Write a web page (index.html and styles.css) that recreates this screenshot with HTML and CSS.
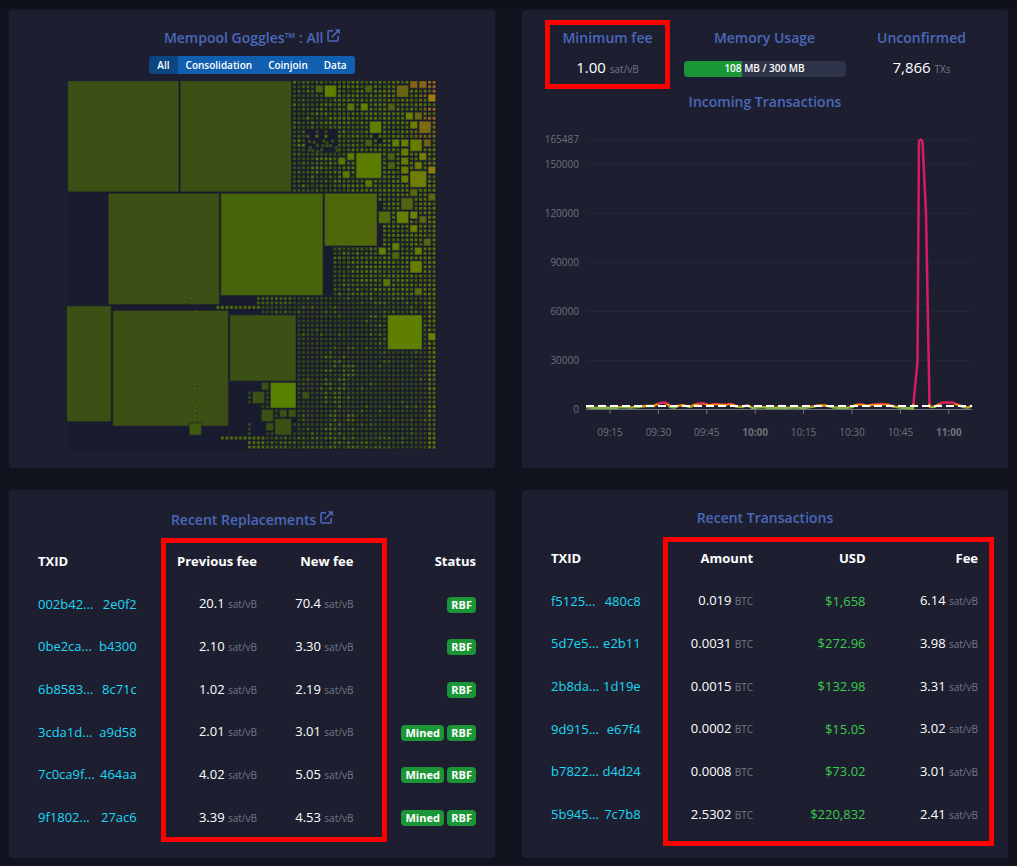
FILE: index.html
```html
<!DOCTYPE html>
<html lang="en">
<head>
    <meta charset="UTF-8">
    <meta name="viewport" content="width=device-width, initial-scale=1.0">
    <title>Mempool Dashboard</title>
    <link rel="stylesheet" href="styles.css">
</head>
<body>
<main class="dashboard">
    <!-- Goggles -->
    <section class="card goggles">
        <h5 class="card-title">
            <a href="#">Mempool Goggles™ : All
                <svg class="ext-icon" viewBox="0 0 13 13" aria-hidden="true"><path stroke-width="1.6" d="M6 1.8H2.2Q1 1.8 1 3v7.8Q1 12 2.2 12H10q1.2 0 1.2-1.2V7M4.7 8.3 11.5 1.5"/><path class="solid" d="M7.8.2h5v5z"/></svg>
            </a>
        </h5>
        <div class="btn-group">
            <button type="button" class="active">All</button>
            <button type="button">Consolidation</button>
            <button type="button">Coinjoin</button>
            <button type="button">Data</button>
        </div>
        <svg id="blocks" class="blocks" viewBox="0 0 368 368"></svg>
    </section>

    <!-- Mempool state -->
    <section class="card">
        <div class="stats">
            <div class="stat">
                <h5 class="card-title">Minimum fee</h5>
                <p class="stat-value">1.00 <span class="unit">sat/vB</span></p>
                <div class="highlight highlight-stat"></div>
            </div>
            <div class="stat stat-wide">
                <h5 class="card-title">Memory Usage</h5>
                <div class="progress">
                    <div class="progress-bar" style="width: 36%"></div>
                    <div class="progress-text">108 MB / 300 MB</div>
                </div>
            </div>
            <div class="stat">
                <h5 class="card-title">Unconfirmed</h5>
                <p class="stat-value">7,866 <span class="unit">TXs</span></p>
            </div>
        </div>
        <h5 class="card-title chart-title">Incoming Transactions</h5>
        <svg id="chart" class="chart" viewBox="0 0 486 330">
            <defs>
                <!-- line colour follows the value -->
                <linearGradient id="levels" gradientUnits="userSpaceOnUse" x1="0" y1="0" x2="0" y2="300">
                    <stop offset="0.944" stop-color="#d81b60"/>
                    <stop offset="0.948" stop-color="#fb8c00"/>
                    <stop offset="0.955" stop-color="#fb8c00"/>
                    <stop offset="0.957" stop-color="#7cb342"/>
                </linearGradient>
            </defs>
            <g id="grid"></g>
            <path class="series" stroke-width="2.5" d="M64 287L68 287.6 76 288 84 287.4 92 288 100 287 108 287.6 116 287 124 286 132 286Q138 282 142 282.6T148 287L152 287.6Q158 284.4 162 285.4T168 287Q175 282.8 180 283.2T186 285.6Q192 283.4 198 284.4T207 283.8Q211 283.8 214 286.6L220 287 225 285.4 231 288 239 287 248 288 256 287.4 264 288 273 287.2 281 288 289 287 296 285.6 304 285.6 312 287.6 322 288 330 287.2Q334 283.8 338 284.2T345 286Q353 283.8 360 284T370 286.2L378 287.6 391 288.5 395.5 241 397 21.5Q398.5 17.5 400.5 21.5L404 93 407.5 285 408 287 413 286.8Q419 282 424 282.4L431 282.6Q436 285 441 287L446 287.6 450 285.6"/>
            <path class="average" d="M64 286h386"/>
        </svg>
    </section>

    <!-- Replacements -->
    <section class="card table-card">
        <h5 class="card-title">
            <a href="#">Recent Replacements
                <svg class="ext-icon" viewBox="0 0 13 13" aria-hidden="true"><path stroke-width="1.6" d="M6 1.8H2.2Q1 1.8 1 3v7.8Q1 12 2.2 12H10q1.2 0 1.2-1.2V7M4.7 8.3 11.5 1.5"/><path class="solid" d="M7.8.2h5v5z"/></svg>
            </a>
        </h5>
        <table class="replacements">
            <thead>
                <tr><th class="txid">TXID</th><th class="prev">Previous fee</th><th class="new">New fee</th><th>Status</th></tr>
            </thead>
            <tbody>
                <tr>
                    <td><a href="#" class="hash"><span>002b42...</span><span>2e0f2</span></a></td>
                    <td>20.1 <span class="unit">sat/vB</span></td>
                    <td>70.4 <span class="unit">sat/vB</span></td>
                    <td><span class="badge">RBF</span></td>
                </tr>
                <tr>
                    <td><a href="#" class="hash"><span>0be2ca...</span><span>b4300</span></a></td>
                    <td>2.10 <span class="unit">sat/vB</span></td>
                    <td>3.30 <span class="unit">sat/vB</span></td>
                    <td><span class="badge">RBF</span></td>
                </tr>
                <tr>
                    <td><a href="#" class="hash"><span>6b8583...</span><span>8c71c</span></a></td>
                    <td>1.02 <span class="unit">sat/vB</span></td>
                    <td>2.19 <span class="unit">sat/vB</span></td>
                    <td><span class="badge">RBF</span></td>
                </tr>
                <tr>
                    <td><a href="#" class="hash"><span>3cda1d...</span><span>a9d58</span></a></td>
                    <td>2.01 <span class="unit">sat/vB</span></td>
                    <td>3.01 <span class="unit">sat/vB</span></td>
                    <td><span class="badge">Mined</span> <span class="badge">RBF</span></td>
                </tr>
                <tr>
                    <td><a href="#" class="hash"><span>7c0ca9f...</span><span>464aa</span></a></td>
                    <td>4.02 <span class="unit">sat/vB</span></td>
                    <td>5.05 <span class="unit">sat/vB</span></td>
                    <td><span class="badge">Mined</span> <span class="badge">RBF</span></td>
                </tr>
                <tr>
                    <td><a href="#" class="hash"><span>9f1802...</span><span>27ac6</span></a></td>
                    <td>3.39 <span class="unit">sat/vB</span></td>
                    <td>4.53 <span class="unit">sat/vB</span></td>
                    <td><span class="badge">Mined</span> <span class="badge">RBF</span></td>
                </tr>
            </tbody>
        </table>
        <div class="highlight highlight-fees"></div>
    </section>

    <!-- Transactions -->
    <section class="card table-card latest">
        <h5 class="card-title">Recent Transactions</h5>
        <table class="transactions">
            <thead>
                <tr><th class="txid">TXID</th><th>Amount</th><th>USD</th><th>Fee</th></tr>
            </thead>
            <tbody>
                <tr>
                    <td><a href="#" class="hash"><span>f5125...</span><span>480c8</span></a></td>
                    <td>0.019 <span class="unit">BTC</span></td>
                    <td class="usd">$1,658</td>
                    <td>6.14 <span class="unit">sat/vB</span></td>
                </tr>
                <tr>
                    <td><a href="#" class="hash"><span>5d7e5...</span><span>e2b11</span></a></td>
                    <td>0.0031 <span class="unit">BTC</span></td>
                    <td class="usd">$272.96</td>
                    <td>3.98 <span class="unit">sat/vB</span></td>
                </tr>
                <tr>
                    <td><a href="#" class="hash"><span>2b8da...</span><span>1d19e</span></a></td>
                    <td>0.0015 <span class="unit">BTC</span></td>
                    <td class="usd">$132.98</td>
                    <td>3.31 <span class="unit">sat/vB</span></td>
                </tr>
                <tr>
                    <td><a href="#" class="hash"><span>9d915...</span><span>e67f4</span></a></td>
                    <td>0.0002 <span class="unit">BTC</span></td>
                    <td class="usd">$15.05</td>
                    <td>3.02 <span class="unit">sat/vB</span></td>
                </tr>
                <tr>
                    <td><a href="#" class="hash"><span>b7822...</span><span>d4d24</span></a></td>
                    <td>0.0008 <span class="unit">BTC</span></td>
                    <td class="usd">$73.02</td>
                    <td>3.01 <span class="unit">sat/vB</span></td>
                </tr>
                <tr>
                    <td><a href="#" class="hash"><span>5b945...</span><span>7c7b8</span></a></td>
                    <td>2.5302 <span class="unit">BTC</span></td>
                    <td class="usd">$220,832</td>
                    <td>2.41 <span class="unit">sat/vB</span></td>
                </tr>
            </tbody>
        </table>
        <div class="highlight highlight-amounts"></div>
    </section>
</main>
<script src="script.js"></script>
</body>
</html>
```
FILE: styles.css
```css
body {
    font-family: "Open Sans", "Noto Sans", sans-serif;
    font-size: 13px;
    line-height: 20px;
    color: #fff;
    background: #11131f linear-gradient(#0d0f19, #11131f 10px) no-repeat;
    margin: 0;
}
a {
    color: inherit;
    text-decoration: none;
}
.dashboard {
    display: grid;
    grid-template-columns: 1fr 1fr;
    column-gap: 27px;
    row-gap: 22px;
    padding: 10px 9px 8px;
}
.card {
    position: relative;
    background-color: #1d1f31;
    border-radius: 3px;
    box-sizing: border-box;
    padding-top: 17px;
}
.card-title {
    margin: 0;
    font-size: 14px;
    font-weight: 600;
    line-height: 22px;
    text-align: center;
    color: #4a68b9;
}
.ext-icon {
    width: 13px;
    height: 13px;
    margin-bottom: 1px;
    fill: none;
    stroke: #4a68b9;
}
.ext-icon .solid {
    fill: #4a68b9;
    stroke: none;
}
.unit {
    font-size: 10px;
    color: #737683;
}

/* Goggles */
.goggles {
    display: flex;
    flex-direction: column;
    align-items: center;
    padding-bottom: 18px;
}
.btn-group {
    display: flex;
    margin: 7px 0;
    border-radius: 3px;
    overflow: hidden;
}
.btn-group button {
    height: 18px;
    padding: 0 8px;
    border: none;
    background-color: #105fb0;
    color: #fff;
    font-family: inherit;
    font-size: 10px;
    font-weight: 600;
    line-height: 18px;
    cursor: pointer;
}
.btn-group button.active {
    background-color: #0c4580;
}
.blocks {
    width: 76%;
    background-color: #191b2f;
}

/* Mempool state */
.stats {
    display: flex;
    justify-content: space-between;
    padding: 0 29px 0 28px;
}
.stat {
    position: relative;
    width: 115px;
}
.stat-wide {
    width: 162px;
}
.stat-value {
    margin: 7px 0 0;
    font-size: 15px;
    line-height: 22px;
    text-align: center;
}
.progress {
    position: relative;
    height: 16px;
    margin-top: 12px;
    border-radius: 4px;
    overflow: hidden;
    background-color: #2d3348;
}
.progress-bar {
    height: 100%;
    background-color: #1b9637;
}
.progress-text {
    position: absolute;
    inset: 0;
    font-size: 10px;
    font-weight: 600;
    line-height: 15px;
    text-align: center;
}
.chart-title {
    margin-top: 11px;
}
.chart {
    display: block;
    width: 100%;
    margin-top: 7px;
}
.chart text {
    font-size: 10px;
    fill: #6e7079;
}
.chart .hour {
    font-weight: bold;
}
.chart .split {
    stroke: #2b2e42;
    stroke-dasharray: 1 1;
}
.chart .axis {
    stroke: #6e7079;
}
.series {
    fill: none;
    stroke: url(#levels);
    stroke-linejoin: round;
}
.average {
    stroke: #fff;
    stroke-width: 2px;
    stroke-dasharray: 8 4;
}

/* Tables */
.table-card {
    padding: 19px 19px 20px 29px;
}
.table-card .card-title {
    padding-right: 10px;
}
.latest {
    padding-top: 17px;
}
table {
    width: 100%;
    height: 298px;
    table-layout: fixed;
    border-collapse: collapse;
}
th, td {
    height: 42px;
    padding: 0;
    text-align: right;
    white-space: nowrap;
}
th {
    font-weight: bold;
}
.replacements {
    margin-top: 9px;
}
.replacements .txid {
    width: 23%;
}
.replacements .prev {
    width: 27%;
}
.replacements .new {
    width: 22%;
}
.transactions {
    width: calc(100% - 11px);
    margin-top: 8px;
}
.transactions .txid {
    width: 21%;
}
th:first-child {
    text-align: left;
}
.hash {
    display: flex;
    justify-content: space-between;
    margin-right: 2px;
    color: #1bd8f4;
}
.transactions .hash {
    margin-right: 0;
}
.usd {
    color: #3bcc49;
}
.badge {
    display: inline-block;
    padding: 0 4px;
    border-radius: 4px;
    background-color: #1b9637;
    font-size: 11px;
    font-weight: bold;
    line-height: 16px;
}

/* Red frames */
.highlight {
    position: absolute;
    box-sizing: border-box;
    border: 5px solid #f00;
    pointer-events: none;
}
.highlight-stat {
    inset: -7px -5px -9px;
}
.highlight-fees {
    top: 48px;
    bottom: 16px;
    left: 152px;
    right: 108px;
}
.highlight-amounts {
    top: 47px;
    bottom: 12px;
    left: 141px;
    right: 14px;
}
```
FILE: script.js
```javascript
const NS = 'http://www.w3.org/2000/svg';

function add(parent, tag, attrs, text) {
    const el = document.createElementNS(NS, tag);
    for (const key in attrs) el.setAttribute(key, attrs[key]);
    if (text) el.textContent = text;
    parent.appendChild(el);
}

// Block view, 82 x 82 cells
const UNIT = 4.488;
const blocks = document.getElementById('blocks');

// [column, row, size, colour]
const squares = [
    [0, 0, 25, '#3b5014'], [25, 0, 25, '#3b5014'], [9, 25, 25, '#3b5014'],
    [34, 25, 23, '#45640c'], [57, 25, 12, '#4f660b'], [-16, 50, 26, '#3b5014'],
    [10, 51, 26, '#3b5014'], [36, 52, 15, '#3b5014'], [45, 67, 6, '#587f00'],
    [71, 52, 8, '#5f7f00'], [64, 16, 6, '#5a7c00'], [80, 56, 2, '#697c08'],
    [41, 69, 3, '#3b5014'], [43, 67, 2, '#3b5014'], [43, 73, 3, '#3b5014'],
    [44, 76, 2, '#3b5014'], [46, 75, 4, '#3b5014'], [47, 73, 2, '#3b5014'],
    [49, 73, 2, '#3b5014'], [52, 69, 2, '#3b5014'], [27, 76, 3, '#3f5a10'],
    [76, 40, 3, '#677d00'], [77, 37, 2, '#677d00'], [69, 37, 2, '#5f7f00'],
    [72, 36, 2, '#5f7f00'], [72, 38, 2, '#4d640f'], [70, 44, 2, '#5a7808'],
    [77, 46, 2, '#586a0e'], [79, 35, 2, '#556610'], [55, 1, 2, '#46650c'],
    [57, 1, 3, '#5f7f00'], [66, 1, 2, '#4c6210'], [73, 1, 3, '#69650f'],
    [76, 0, 2, '#826514'], [78, 0, 2, '#826514'], [80, 3, 2, '#a07a0c'],
    [62, 5, 2, '#55740a'], [65, 5, 2, '#5f7f00'], [71, 5, 2, '#4d6010'],
    [75, 7, 2, '#6c7f02'], [77, 7, 2, '#656a10'], [76, 9, 2, '#6c7f02'],
    [78, 9, 3, '#7c6a13'], [67, 9, 3, '#5f7f00'], [72, 13, 2, '#607f00'],
    [74, 13, 2, '#687c00'], [76, 13, 3, '#687c00'], [79, 13, 2, '#6d6112'],
    [66, 13, 2, '#465e10'], [74, 15, 2, '#667d00'], [74, 17, 2, '#687c00'],
    [74, 19, 2, '#667d00'], [74, 21, 2, '#667d00'], [62, 16, 2, '#5a7c00'],
    [60, 17, 2, '#557800'], [61, 20, 2, '#557800'], [66, 22, 2, '#567800'],
    [71, 16, 2, '#4b6210'], [71, 18, 2, '#4b6210'], [78, 16, 2, '#757e05'],
    [77, 18, 2, '#6c7808'], [80, 19, 2, '#877b0a'], [76, 20, 4, '#6f7e04'],
    [76, 24, 2, '#556a0e'], [80, 25, 2, '#5c6610'], [74, 26, 3, '#536410'],
    [69, 29, 3, '#506a0e'], [73, 29, 3, '#667f00'], [76, 29, 2, '#718003'],
    [78, 30, 2, '#5a6110'], [76, 32, 2, '#667d00']
];
const taken = {};

function drawSquare(col, row, size, colour, opacity) {
    const side = size * UNIT - 1.3;
    add(blocks, 'rect', {
        x: (col * UNIT + 0.6).toFixed(2), y: (row * UNIT - 0.4).toFixed(2),
        width: side.toFixed(2), height: side.toFixed(2), fill: colour,
        stroke: '#191b2f', 'stroke-opacity': 0.4, 'stroke-width': size > 1 ? 1.4 : 0.8, opacity: opacity || 1
    });
}

for (const [col, row, size, colour] of squares) {
    for (let c = col; c < col + size; c++) {
        for (let r = row; r < row + size; r++) taken[c + ',' + r] = true;
    }
    drawSquare(col, row, size, colour);
}

let seed = 7;
function random() {
    seed = (seed * 16807) % 2147483647;
    return seed / 2147483647;
}

// First filled column of each row
function firstColumn(row) {
    if (row < 25) return 50;
    if (row < 27) return 69;
    if (row < 37) return 70;
    if (row < 48) return 59;
    if (row < 50) return 42;
    if (row === 50) return 33;
    if (row === 51) return 43;
    if (row === 76) return 50;
    if (row === 79) return 34;
    if (row > 79) return 40;
    return 51;
}

function dotColour(col, row) {
    const n = random();
    if (row < 14 && col > 78 - row / 6 && n < 0.8) return row < 9 && col > 79 ? '#a8701a' : '#7d6f10';
    if (col > 79) return n < 0.6 ? '#6c7d04' : '#566a0c';
    if (row < 48) {
        const heat = (col - 48) / 20 + (row < 25 ? 0 : -0.25);
        if (n < heat * 0.6) return '#5c7c02';
        return n < heat + 0.2 ? '#4b680a' : '#3d5412';
    }
    if (row === 50 && col < 43) return '#567604';
    if (row > 78 && col < 44) return '#567604';
    if (row < 60 && col > 66) return n < 0.3 ? '#55720a' : '#3d5412';
    if (row < 50 && col < 50) return '#4b680a';
    if (row > 60 && col > 56 && col < 64) return n < 0.45 ? '#55720a' : '#3b5014';
    if (row > 78 && col < 72) return n < 0.5 ? '#4b680a' : '#3b5014';
    return n < 0.08 ? '#4b680a' : '#384c16';
}

for (let row = 0; row < 82; row++) {
    for (let col = firstColumn(row); col < 82; col++) {
        if (taken[col + ',' + row]) continue;
        // loose patches where the grid breaks up
        if (row > 10 && row < 13 && col > 52 && col < 60 && random() < 0.8) continue;
        if (row > 12 && row < 16 && col > 52 && col < 60) {
            if (random() < 0.7) drawSquare(col + random() * 0.6, row + random() * 0.6, 1, '#3f5a10', 0.85);
            continue;
        }
        if (row > 11 && row < 15 && col > 67 && col < 71 && random() < 0.6) continue;
        drawSquare(col, row, 1, dotColour(col, row), 0.9);
    }
}

// stragglers left of the main field
[[40, 69], [40, 70], [40, 71], [44, 69], [44, 70], [44, 71], [43, 72], [44, 72],
 [46, 73], [46, 74], [40, 76], [40, 77], [40, 78], [44, 78], [45, 78], [50, 78]
].forEach(([col, row]) => drawSquare(col, row, 1, '#384c16', 0.85));
[[27, 48], [28, 51], [28, 67], [28, 68], [28, 72], [28, 73], [28, 74], [28, 75]
].forEach(([col, row]) => drawSquare(col, row, 1, '#4b6d08', 0.7));

// Incoming transactions axes
const grid = document.getElementById('grid');
[[165487, 19], [150000, 44], [120000, 93], [90000, 142], [60000, 191], [30000, 240], [0, 289]].forEach(([value, y]) => {
    add(grid, 'path', { d: `M64 ${y + 0.5}H450`, class: value ? 'split' : 'axis' });
    add(grid, 'text', { x: 57, y: y + 4, 'text-anchor': 'end' }, String(value));
});
['09:15', '09:30', '09:45', '10:00', '10:15', '10:30', '10:45', '11:00'].forEach((time, i) => {
    const x = 88 + i * 48.4;
    add(grid, 'path', { d: `M${x.toFixed(1)} 290v4`, class: 'axis' });
    add(grid, 'text', { x: x.toFixed(1), y: 316, 'text-anchor': 'middle', class: time.endsWith(':00') ? 'hour' : '' }, time);
});
```
